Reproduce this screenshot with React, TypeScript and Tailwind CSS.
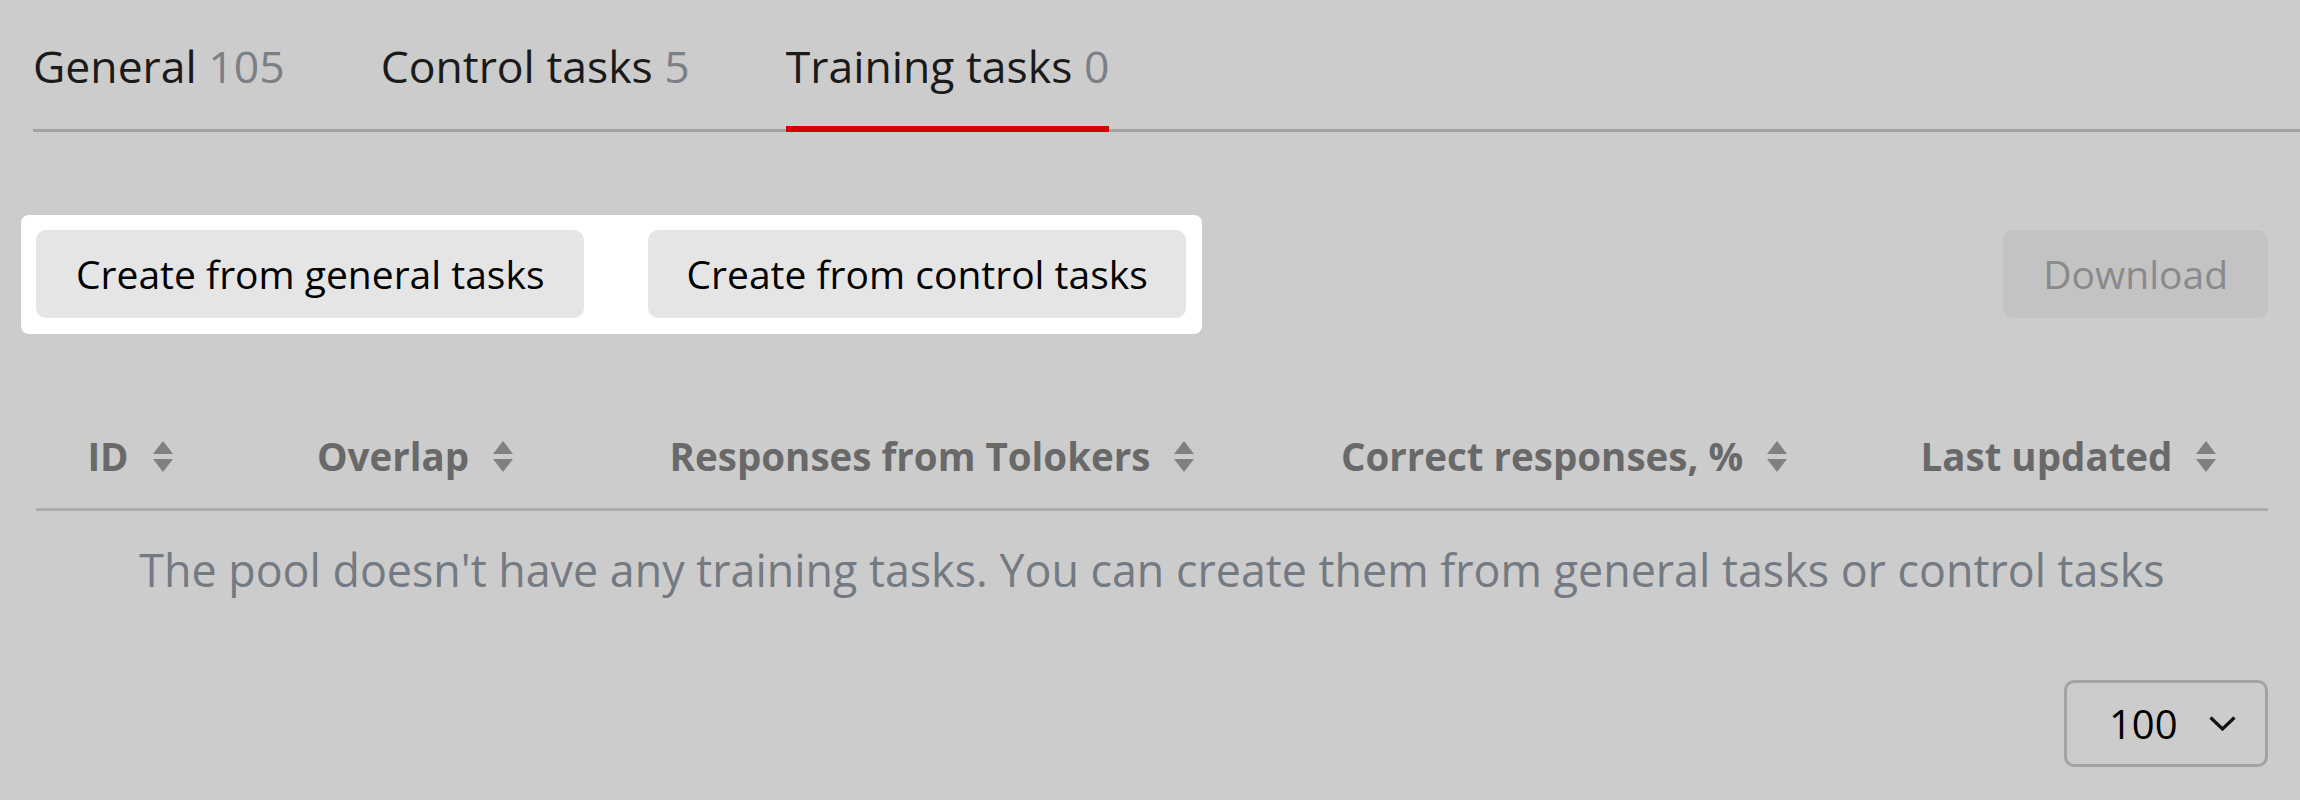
import React from "react";

const tabs = [
  { label: "General", count: 105, active: false },
  { label: "Control tasks", count: 5, active: false },
  { label: "Training tasks", count: 0, active: true },
];

// column widths picked so header cells centre under the reference
const columns = [
  { title: "ID", width: "w-[188px]" },
  { title: "Overlap", width: "w-[382px]" },
  { title: "Responses from Tolokers", width: "w-[652px]" },
  { title: "Correct responses, %", width: "w-[612px]" },
  { title: "Last updated", width: "w-[397px]" },
];

const SortIcon = () => (
  <svg width="20" height="31" viewBox="0 0 20 31" className="shrink-0">
    <path d="M10 0 L20 13 L0 13 Z" fill="#808080" />
    <path d="M0 18 L20 18 L10 31 Z" fill="#808080" />
  </svg>
);

const Chevron = () => (
  <svg width="27" height="15" viewBox="0 0 27 15" fill="none">
    <path d="M1.5 1.5 L13.5 13 L25.5 1.5" stroke="#111" strokeWidth="3.2" />
  </svg>
);

export default function App() {
  return (
    <div className="h-[800px] w-full overflow-hidden bg-[#cccccc] pl-[36px] pr-[32px] font-['Open_Sans',sans-serif]">
      {/* tabs */}
      <div className="-ml-[3px] -mr-[32px] flex gap-[96px] border-b-[3px] border-[#a3a3a3] pt-[40px]">
        {tabs.map((t) => (
          <div
            key={t.label}
            className={`-mb-[3px] pb-[34px] text-[44.5px] leading-[52px] text-[#1a1a1a] border-b-[6px] ${
              t.active ? "border-[#d40000]" : "border-transparent"
            }`}
          >
            {t.label} <span className="text-[#7b8087]">{t.count}</span>
          </div>
        ))}
      </div>

      {/* actions */}
      <div className="mt-[83px] flex items-start justify-between">
        <div className="-ml-[15px] flex gap-[64px] rounded-[8px] bg-white p-[15px] pb-[16px] pr-[16px]">
          <button className="h-[88px] rounded-[10px] bg-[#e5e5e5] px-[40px] text-[39px] text-black">
            Create from general tasks
          </button>
          <button className="h-[88px] rounded-[10px] bg-[#e5e5e5] px-[38px] text-[39px] text-black">
            Create from control tasks
          </button>
        </div>
        <button className="mt-[15px] h-[88px] rounded-[10px] bg-[#c3c3c3] px-[40px] text-[39px] text-[#8a8a8a]">
          Download
        </button>
      </div>

      {/* table */}
      <div className="mt-[96px]">
        <div className="flex border-b-[3px] border-[#aeaeae] pb-[26px]">
          {columns.map((c) => (
            <div key={c.title} className={`${c.width} flex items-center justify-center gap-[24px]`}>
              <span className="text-[38.5px] font-bold leading-[52px] text-[#696969]">{c.title}</span>
              <SortIcon />
            </div>
          ))}
        </div>
        <p className="pt-[29px] text-center text-[44.8px] leading-[60px] text-[#737a82]">
          The pool doesn't have any training tasks. You can create them from general tasks or control tasks
        </p>
      </div>

      {/* pager */}
      <div className="mt-[80px] flex justify-end">
        <div className="flex h-[87px] w-[204px] items-center rounded-[10px] border-[3px] border-[#a3a3a3] pl-[42px] pr-[29px]">
          <span className="flex-1 text-[40px] text-black">100</span>
          <Chevron />
        </div>
      </div>
    </div>
  );
}
